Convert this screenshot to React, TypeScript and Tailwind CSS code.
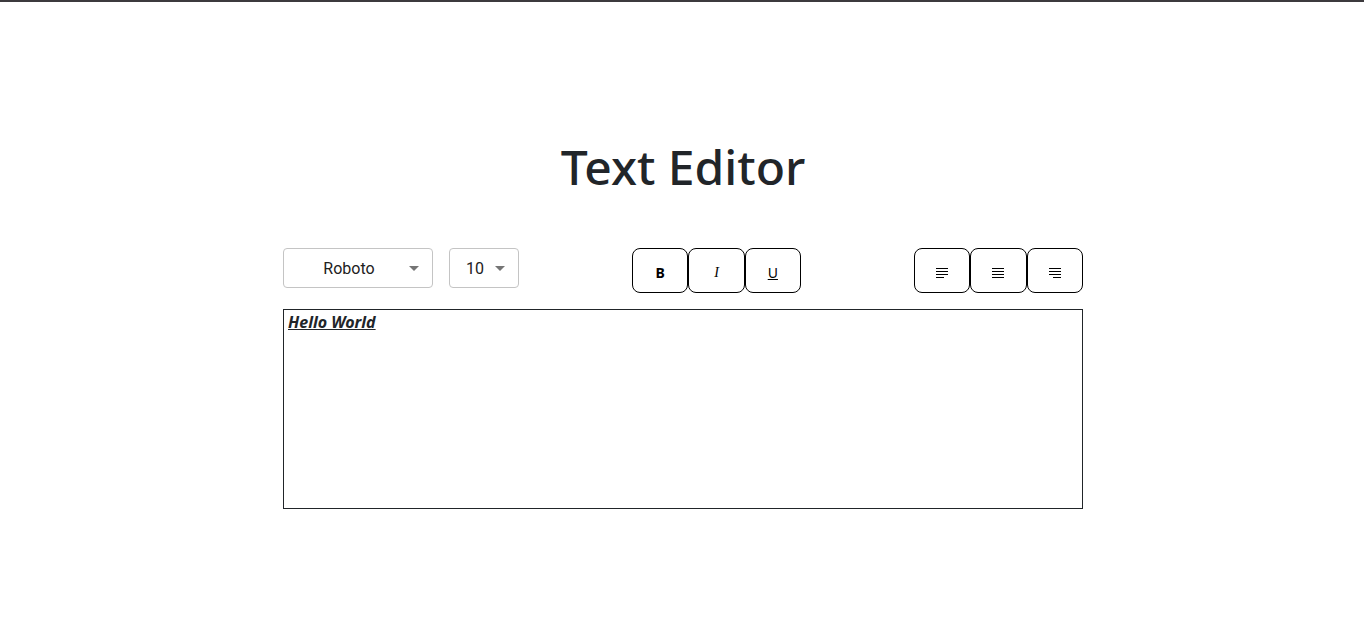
import { useState } from "react";
import type { CSSProperties, ReactNode } from "react";

type Align = "left" | "center" | "right";

const FONTS = ["Roboto", "Lato", "Open Sans", "Inter"];
const SIZES = ["10", "12", "14", "16", "18", "24"];

function SelectBox({ label, value, options, onChange, width }: {
  label: string;
  value: string;
  options: string[];
  onChange: (v: string) => void;
  width: string;
}) {
  return (
    <div className={`relative h-10 ${width}`}>
      <select
        aria-label={label}
        value={value}
        onChange={(e) => onChange(e.target.value)}
        className="h-full w-full appearance-none rounded border border-[#c4c4c4] bg-white pt-0.5 pr-8 pl-3.5 text-center font-[Roboto,sans-serif] text-base text-[#212121]"
      >
        {options.map((o) => (
          <option key={o}>{o}</option>
        ))}
      </select>
      <svg viewBox="0 0 24 24" aria-hidden="true" className="pointer-events-none absolute top-2 right-[7px] size-6 fill-[#757575]">
        <path d="M7 10l5 5 5-5z" />
      </svg>
    </div>
  );
}

function ToolButton({ label, onClick, children }: { label: string; onClick: () => void; children: ReactNode }) {
  return (
    <button
      type="button"
      aria-label={label}
      onClick={onClick}
      className="flex h-[45px] items-center justify-center rounded-lg border border-black bg-white pt-1 text-sm text-black"
    >
      {children}
    </button>
  );
}

const LAST_LINE: Record<Align, string> = {
  left: "M0 9h8v1H0z",
  center: "M0 9h12v1H0z",
  right: "M4 9h8v1H4z",
};

function AlignIcon({ kind }: { kind: Align }) {
  return (
    <svg viewBox="0 0 12 10" aria-hidden="true" shapeRendering="crispEdges" className="h-2.5 w-3 fill-black">
      <path d="M0 0h12v1H0zM0 3h12v1H0zM0 6h12v1H0z" />
      <path d={LAST_LINE[kind]} />
    </svg>
  );
}

export default function App() {
  const [font, setFont] = useState("Roboto");
  const [size, setSize] = useState("10");
  const [bold, setBold] = useState(true);
  const [italic, setItalic] = useState(true);
  const [underline, setUnderline] = useState(true);
  const [align, setAlign] = useState<Align>("left");

  const textStyle: CSSProperties = {
    fontWeight: bold ? 700 : 400,
    fontStyle: italic ? "italic" : "normal",
    textDecorationLine: underline ? "underline" : "none",
    textAlign: align,
  };

  return (
    <div className="min-h-screen border-t-2 border-[#3c3a3d] bg-white pl-0.5 font-['Noto_Sans',sans-serif] text-[#212529]">
      <main className="mx-auto w-full max-w-[800px] pt-[135px]">
        <h1 className="text-center text-5xl leading-[60px] font-medium">Text Editor</h1>
        <div className="mt-[51px] flex items-start justify-between">
          <div className="flex gap-4">
            <SelectBox label="Font" value={font} options={FONTS} onChange={setFont} width="w-[150px]" />
            <SelectBox label="Font size" value={size} options={SIZES} onChange={setSize} width="w-[70px]" />
          </div>
          <div className="grid w-[169px] grid-cols-3">
            <ToolButton label="Bold" onClick={() => setBold(!bold)}>
              <b className="font-bold">B</b>
            </ToolButton>
            <ToolButton label="Italic" onClick={() => setItalic(!italic)}>
              <i className="font-['Liberation_Serif',serif]">I</i>
            </ToolButton>
            <ToolButton label="Underline" onClick={() => setUnderline(!underline)}>
              <u>U</u>
            </ToolButton>
          </div>
          <div className="grid w-[169px] grid-cols-3">
            {(["left", "center", "right"] as Align[]).map((kind) => (
              <ToolButton key={kind} label={`Align ${kind}`} onClick={() => setAlign(kind)}>
                <AlignIcon kind={kind} />
              </ToolButton>
            ))}
          </div>
        </div>
        <div
          contentEditable
          suppressContentEditableWarning
          role="textbox"
          aria-label="Document"
          style={textStyle}
          className="mt-4 h-[200px] border border-[#212529] px-1 text-base leading-6"
        >
          Hello World
        </div>
      </main>
    </div>
  );
}
